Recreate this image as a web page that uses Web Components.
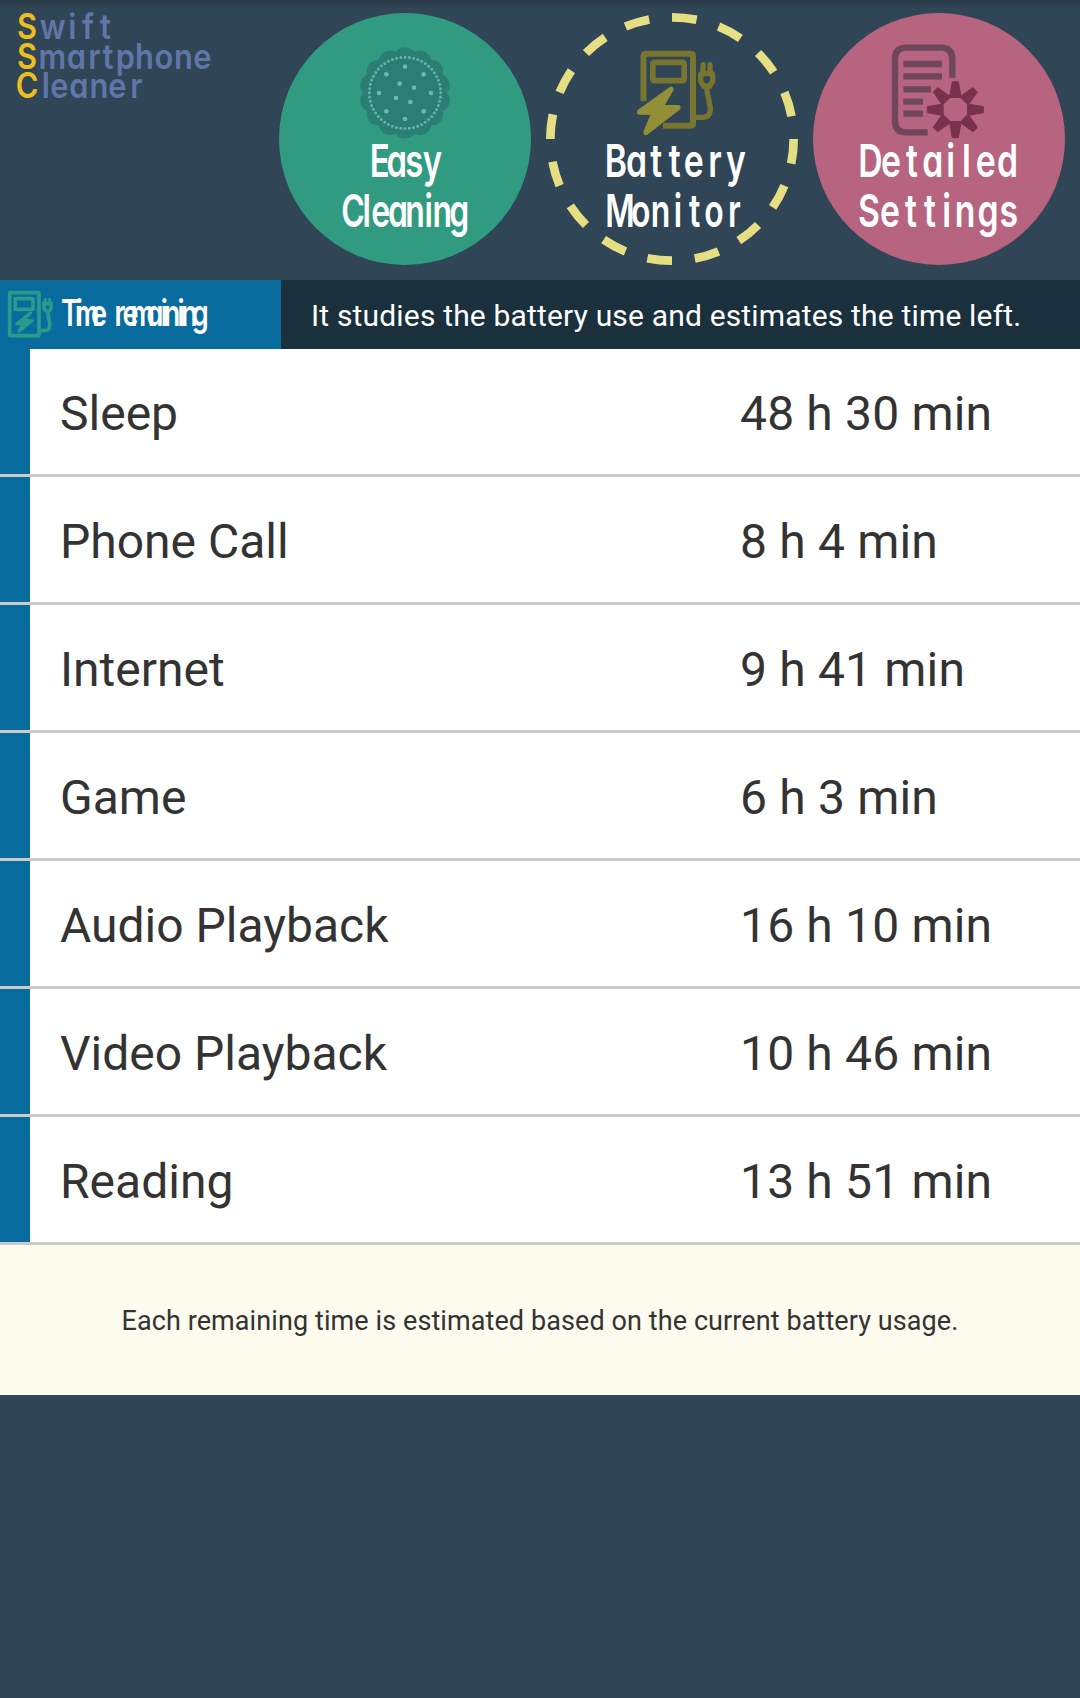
<!DOCTYPE html>
<html lang="en">
<head>
<meta charset="utf-8">
<title>Swift Smartphone Cleaner</title>
<style>
  html,body{margin:0;background:#304556}
  body{font-family:Roboto,"Liberation Sans",sans-serif;color:#333}
</style>
</head>
<body>
<battery-screen></battery-screen>
<script>
// Lettering: every glyph is centred on its own x, squeezed horizontally by k.
const word = (text, centres, y, size, k, fill = "#fff") =>
  `<text transform="scale(${k} 1)" x="${centres.map((c) => (c / k).toFixed(1)).join(" ")}" y="${y}" font-size="${size}" fill="${fill}">${text}</text>`;

const LETTERING = `
  svg{display:block}
  text{font-family:Inter,Roboto,sans-serif;font-weight:600;text-anchor:middle;font-feature-settings:"cv11" 1;white-space:pre}`;

const polar = (cx, cy, r, deg) => [cx + r * Math.cos(deg * Math.PI / 180), cy + r * Math.sin(deg * Math.PI / 180)];

const cookie = () => {
  const lobes = Array.from({ length: 14 }, (_, i) => {
    const [x, y] = polar(405, 278.5, 103, -90 + i * 360 / 14);
    return `<circle cx="${x.toFixed(1)}" cy="${y.toFixed(1)}" r="34"/>`;
  }).join("");
  const holes = [[405,200],[349,223],[461,223],[389,251],[432,263],[327,279],[483,279],[378,294],[421,306],[349,334],[461,334],[405,357]]
    .map(([x, y]) => `<circle cx="${x}" cy="${y}" r="7"/>`).join("");
  return `<g fill="#2a7e74"><circle cx="405" cy="278.5" r="110"/>${lobes}</g>
    <circle cx="405" cy="278.5" r="107" fill="none" stroke="#62b5a6" stroke-width="9" stroke-linecap="round" pathLength="520" stroke-dasharray="0 10"/>
    <g fill="#66bcae">${holes}</g>`;
};

const pump = () => `
  <g fill="none" stroke="#77752f" stroke-width="18">
    <path d="M310.500 304V168q0-7 7-7H452q7 0 7 7V370q0 7-7 7H369"/>
    <rect x="338.500" y="187" width="94" height="55" rx="4" stroke-width="17"/>
    <path d="M489 194V218M510 194V218" stroke-width="16" stroke-linecap="round"/>
    <path d="M486 221H514Q518 221 518 225V244L509 258H491L482 244V225Q482 221 486 221Z" stroke-width="16"/>
    <path d="M500 264C503 295 512 312 511 332Q508 352 488 352H466" stroke-width="16"/>
  </g>
  <path d="M393 268 361 322 414 323 318 397 343 337 299 336Z" fill="#938f37" stroke="#938f37" stroke-width="16" stroke-linejoin="round"/>`;

const settings = () => {
  const teeth = Array.from({ length: 8 }, (_, i) =>
    `<path d="M442 245H460L469 296H433Z" transform="rotate(${i * 45} 451 329)"/>`).join("");
  return `<path d="M442 233V177Q442 143 408 143H304Q270 143 270 177V363Q270 397 304 397H368" fill="none" stroke="#70465a" stroke-width="19"/>
    <path d="M295 192H411M295 229H411M295 268H378M295 305H354M295 341H354" stroke="#70465a" stroke-width="19"/>
    <g fill="#79324e" stroke="#79324e" stroke-width="3" stroke-linejoin="round">${teeth}</g>
    <path d="M436 294H467L486 313V344L467 363H436L416 344V313Z" fill="#b6647f"/>`;
};

const TABS = {
  cleaning: {
    box: "27 39 756 756",
    art: () => `<circle cx="405" cy="417" r="378" fill="#319b82"/>${cookie()}
      ${word("Easy", [329,380,433,487], 532, 137, .72)}
      ${word("Cleaning", [249,290,332,384,435,476,517,568], 680, 137, .7)}`,
  },
  battery: {
    box: "18 39 756 756",
    art: () => `<circle cx="396" cy="417" r="365" fill="none" stroke="#e6de83" stroke-width="26" pathLength="1600" stroke-dasharray="52 48" transform="rotate(-90 396 417)"/>${pump()}
      ${word("Battery", [228,290,349,404,461,525,588], 532, 137, .74)}
      ${word("Monitor", [240,302,362,414,464,522,583], 680, 137, .7)}`,
  },
  settings: {
    box: "24 39 756 756",
    art: () => `<circle cx="402" cy="417" r="378" fill="#b6647f"/>${settings()}
      ${word("Detailed", [196,258,321,383,437,484,542,608], 532, 137, .74)}
      ${word("Settings", [192,255,318,375,425,480,549,611], 680, 137, .74)}`,
  },
};

class AppLogo extends HTMLElement {
  constructor() { super(); this.attachShadow({ mode: "open" }); }
  connectedCallback() {
    const y = (t) => `<tspan fill="#edbe1f">${t}</tspan>`;
    this.shadowRoot.innerHTML = `
      <style>:host{display:block;width:264px}${LETTERING}</style>
      <svg width="264" height="120" viewBox="0 0 792 360">
        ${word(y("S") + "wift", [81,158,217,264,316], 118, 105, .88, "#6076a9")}
        ${word(y("S") + "martphone", [81,157,229,283,324,376,433,492,550,607], 206, 105, .88, "#6076a9")}
        ${word(y("C") + "leaner", [81,137,178,237,297,352,409], 293, 105, .88, "#6076a9")}
      </svg>`;
  }
}

class RoundTab extends HTMLElement {
  constructor() { super(); this.attachShadow({ mode: "open" }); }
  connectedCallback() {
    const tab = TABS[this.getAttribute("kind")];
    this.shadowRoot.innerHTML = `
      <style>:host{display:block;width:252px;height:252px;cursor:pointer}${LETTERING}</style>
      <svg width="252" height="252" viewBox="${tab.box}">${tab.art()}</svg>`;
  }
}

class SectionBar extends HTMLElement {
  constructor() { super(); this.attachShadow({ mode: "open" }); }
  connectedCallback() {
    this.shadowRoot.innerHTML = `
      <style>
        :host{display:flex;height:69px;background:#1a303c;color:#fff}
        .title{width:281px;background:#086c9f}
        .info{flex:1;padding:3px 0 0 30px;line-height:66px;font-size:30px;white-space:nowrap;letter-spacing:.17px}
        ${LETTERING}
      </style>
      <div class="title">
        <svg width="281" height="69" viewBox="0 30 843 207">
          <g fill="none" stroke="#2a9b8a" stroke-width="11">
            <rect x="29" y="68" width="88" height="129" rx="3"/>
            <rect x="46" y="86" width="53" height="32" rx="2" stroke-width="11"/>
            <path d="M136 88V98M149 88V98" stroke-width="9" stroke-linecap="round"/>
            <path d="M132 101H153V116L147 123H138L132 116Z" stroke-width="11"/>
            <path d="M143 125Q146 145 149 160Q151 182 135 182H122" stroke-width="11"/>
          </g>
          <path d="M92 129 71 151 97 152 57 184 68 162 50 161Z" fill="#2a9b8a" stroke="#2a9b8a" stroke-width="9" stroke-linejoin="round"/>
          ${word("Time remaining", [210,238,262,297,330,360,392,428,465,493,516,543,568,601], 168, 110, .74)}
        </svg>
      </div>
      <div class="info"><slot></slot></div>`;
  }
}

class TimeRow extends HTMLElement {
  constructor() { super(); this.attachShadow({ mode: "open" }); }
  connectedCallback() {
    this.shadowRoot.innerHTML = `
      <style>
        :host{display:flex;box-sizing:border-box;height:128px;border-bottom:3px solid #cacaca;background:#fff;font-size:48px;line-height:129px;white-space:nowrap}
        .edge{width:30px;background:#086c9f}
        .name{width:680px;padding-left:30px}
        .time{flex:1;letter-spacing:.17px}
      </style>
      <div class="edge"></div>
      <div class="name"><slot></slot></div>
      <div class="time"><slot name="time"></slot></div>`;
  }
}

const TIMES = [
  ["Sleep", "48 h 30 min"],
  ["Phone Call", "8 h 4 min"],
  ["Internet", "9 h 41 min"],
  ["Game", "6 h 3 min"],
  ["Audio Playback", "16 h 10 min"],
  ["Video Playback", "10 h 46 min"],
  ["Reading", "13 h 51 min"],
];

class BatteryScreen extends HTMLElement {
  constructor() { super(); this.attachShadow({ mode: "open" }); }
  connectedCallback() {
    this.shadowRoot.innerHTML = `
      <style>
        :host{display:flex;flex-direction:column;width:1080px;height:1698px;background:#304556;overflow:hidden}
        header{display:flex;justify-content:space-between;height:280px;background:linear-gradient(#283947,#304556 8px)}
        nav{display:flex;gap:15px;padding:13px 15px 0 0}
        .note{height:150px;background:#fdfaee;text-align:center;font-size:27px;line-height:152px;white-space:nowrap;letter-spacing:.09px}
      </style>
      <header>
        <app-logo></app-logo>
        <nav>
          <round-tab kind="cleaning"></round-tab>
          <round-tab kind="battery"></round-tab>
          <round-tab kind="settings"></round-tab>
        </nav>
      </header>
      <section-bar>It studies the battery use and estimates the time left.</section-bar>
      <main>
        ${TIMES.map(([name, time]) => `<time-row>${name}<span slot="time">${time}</span></time-row>`).join("")}
      </main>
      <div class="note">Each remaining time is estimated based on the current battery usage.</div>`;
  }
}

customElements.define("app-logo", AppLogo);
customElements.define("round-tab", RoundTab);
customElements.define("section-bar", SectionBar);
customElements.define("time-row", TimeRow);
customElements.define("battery-screen", BatteryScreen);
</script>
</body>
</html>
